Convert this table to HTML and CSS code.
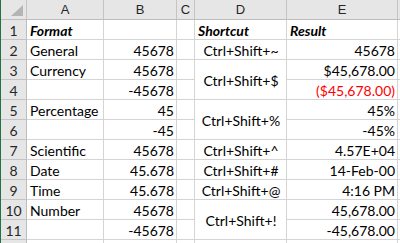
FILE: index.html
```html
<!DOCTYPE html>
<html>
<head>
<meta charset="utf-8">
<link rel="stylesheet" href="styles.css">
</head>
<body>
<div class="sheet">
  <div class="hd corner"><svg class="tri" width="12" height="11" viewBox="0 0 12 11"><polygon points="0,11 12,11 12,0" fill="#b5b5b5"/></svg></div>
  <div class="hd">A</div>
  <div class="hd">B</div>
  <div class="hd">C</div>
  <div class="hd">D</div>
  <div class="hd">E</div>
  <div class="hd hf"></div>

  <div class="rn">1</div>
  <div class="c bi">Format</div>
  <div class="c"></div>
  <div class="c"></div>
  <div class="c bi">Shortcut</div>
  <div class="c bi">Result</div>
  <div class="c"></div>

  <div class="rn">2</div>
  <div class="c">General</div>
  <div class="c r">45678</div>
  <div class="c"></div>
  <div class="c ctr">Ctrl+Shift+~</div>
  <div class="c r">45678</div>
  <div class="c"></div>

  <div class="rn">3</div>
  <div class="c">Currency</div>
  <div class="c r">45678</div>
  <div class="c"></div>
  <div class="c ctr span2">Ctrl+Shift+$</div>
  <div class="c r">$45,678.00</div>
  <div class="c"></div>

  <div class="rn">4</div>
  <div class="c"></div>
  <div class="c r">-45678</div>
  <div class="c"></div>
  <div class="c r red">($45,678.00)</div>
  <div class="c"></div>

  <div class="rn">5</div>
  <div class="c">Percentage</div>
  <div class="c r">45</div>
  <div class="c"></div>
  <div class="c ctr span2">Ctrl+Shift+%</div>
  <div class="c r">45%</div>
  <div class="c"></div>

  <div class="rn">6</div>
  <div class="c"></div>
  <div class="c r">-45</div>
  <div class="c"></div>
  <div class="c r">-45%</div>
  <div class="c"></div>

  <div class="rn">7</div>
  <div class="c">Scientific</div>
  <div class="c r">45678</div>
  <div class="c"></div>
  <div class="c ctr">Ctrl+Shift+^</div>
  <div class="c r">4.57E+04</div>
  <div class="c"></div>

  <div class="rn">8</div>
  <div class="c">Date</div>
  <div class="c r">45.678</div>
  <div class="c"></div>
  <div class="c ctr">Ctrl+Shift+#</div>
  <div class="c r">14-Feb-00</div>
  <div class="c"></div>

  <div class="rn">9</div>
  <div class="c">Time</div>
  <div class="c r">45.678</div>
  <div class="c"></div>
  <div class="c ctr">Ctrl+Shift+@</div>
  <div class="c r">4:16 PM</div>
  <div class="c"></div>

  <div class="rn">10</div>
  <div class="c">Number</div>
  <div class="c r">45678</div>
  <div class="c"></div>
  <div class="c ctr span2">Ctrl+Shift+!</div>
  <div class="c r">45,678.00</div>
  <div class="c"></div>

  <div class="rn">11</div>
  <div class="c"></div>
  <div class="c r">-45678</div>
  <div class="c"></div>
  <div class="c r">-45,678.00</div>
  <div class="c"></div>

  <div class="rn"></div>
  <div class="c"></div>
  <div class="c"></div>
  <div class="c"></div>
  <div class="c"></div>
  <div class="c"></div>
  <div class="c"></div>
</div>
</body>
</html>
```

FILE: styles.css
```css
html, body {
  margin: 0;
  padding: 0;
  background: #ffffff;
  overflow: hidden;
}
body {
  width: 400px;
  height: 243px;
}
.sheet {
  display: grid;
  grid-template-columns: 26px 77px 73px 18px 92px 111px 40px;
  grid-auto-rows: 20px;
  border-left: 1px solid #217346;
  font-family: Lato, "Liberation Sans", sans-serif;
  font-size: 14px;
  color: #000;
  height: 243px;
  overflow: hidden;
}
.hd {
  box-sizing: border-box;
  background: #e6e6e6;
  border-right: 1px solid #c4c4c4;
  border-bottom: 1px solid #bdbdbd;
  display: flex;
  align-items: center;
  justify-content: center;
  color: #262626;
  font-family: "Liberation Sans", Lato, sans-serif;
  font-size: 13px;
}
.corner {
  position: relative;
}
.tri {
  position: absolute;
  right: 3px;
  bottom: 3px;
}
.rn {
  box-sizing: border-box;
  background: #e6e6e6;
  border-right: 1px solid #bdbdbd;
  border-bottom: 1px solid #c4c4c4;
  display: flex;
  align-items: center;
  justify-content: center;
  color: #262626;
  padding-top: 1px;
}
.c {
  box-sizing: border-box;
  border-right: 1px solid #d4d4d4;
  border-bottom: 1px solid #d4d4d4;
  display: flex;
  align-items: center;
  padding: 1px 2px 0 3px;
  white-space: nowrap;
  overflow: hidden;
}
.r {
  justify-content: flex-end;
}
.ctr {
  justify-content: center;
}
.bi {
  font-weight: bold;
  font-style: italic;
}
.span2 {
  grid-row: span 2;
}
.red {
  color: #ff0000;
}
```
